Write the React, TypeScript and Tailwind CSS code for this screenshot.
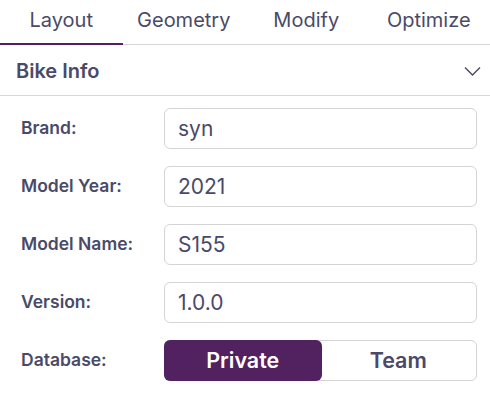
import { useState } from 'react';

const tabs = ['Layout', 'Geometry', 'Modify', 'Optimize'];

const fields = [
    { label: 'Brand:', value: 'syn' },
    { label: 'Model Year:', value: '2021' },
    { label: 'Model Name:', value: 'S155' },
    { label: 'Version:', value: '1.0.0' },
];

export default function App() {
    const [tab, setTab] = useState('Layout');
    const [db, setDb] = useState('Private');

    return (
        <div className="w-[490px] h-[393px] bg-white text-[#4a4a68] font-['Inter',sans-serif] overflow-hidden">
            <div className="flex border-b border-[#d6d6d6]">
                {tabs.map((t) => (
                    <button
                        key={t}
                        onClick={() => setTab(t)}
                        className={`flex-1 h-[45px] -mb-px pb-[3px] text-[20px] ${
                            tab === t ? 'border-b-2 border-[#52215f]' : 'border-b-2 border-transparent'
                        }`}
                    >
                        {t}
                    </button>
                ))}
            </div>

            <div className="flex items-center justify-between h-[51px] pl-4 pr-[9px] border-b border-[#d6d6d6]">
                <span className="text-[20px] font-semibold pt-[1px]">Bike Info</span>
                <svg width="17" height="10" viewBox="0 0 17 10" fill="none" className="mt-[2px]">
                    <path d="M1 1.5 L8.5 9 L16 1.5" stroke="#4a4a68" strokeWidth="1.4" />
                </svg>
            </div>

            <div className="flex flex-col gap-[17px] pt-[12px] pl-[21px] pr-[13px]">
                {fields.map((f) => (
                    <div key={f.label} className="flex items-center">
                        <label className="w-[143px] shrink-0 text-[17.5px] font-semibold">{f.label}</label>
                        <input
                            defaultValue={f.value}
                            className="flex-1 min-w-0 h-[41px] rounded-[6px] border border-[#d4d4d4] px-[13px] text-[21px] text-[#4a4a68] outline-none"
                        />
                    </div>
                ))}
                <div className="flex items-center">
                    <span className="w-[143px] shrink-0 text-[17.5px] font-semibold">Database:</span>
                    <div className="flex-1 flex h-[41px] rounded-[6px] border border-[#d4d4d4]">
                        {['Private', 'Team'].map((o) => (
                            <button
                                key={o}
                                onClick={() => setDb(o)}
                                className={`flex-1 text-[21.5px] font-semibold rounded-[6px] -m-px ${
                                    db === o ? 'bg-[#52215f] text-white' : 'text-[#4a4a68]'
                                }`}
                            >
                                {o}
                            </button>
                        ))}
                    </div>
                </div>
            </div>
        </div>
    );
}
